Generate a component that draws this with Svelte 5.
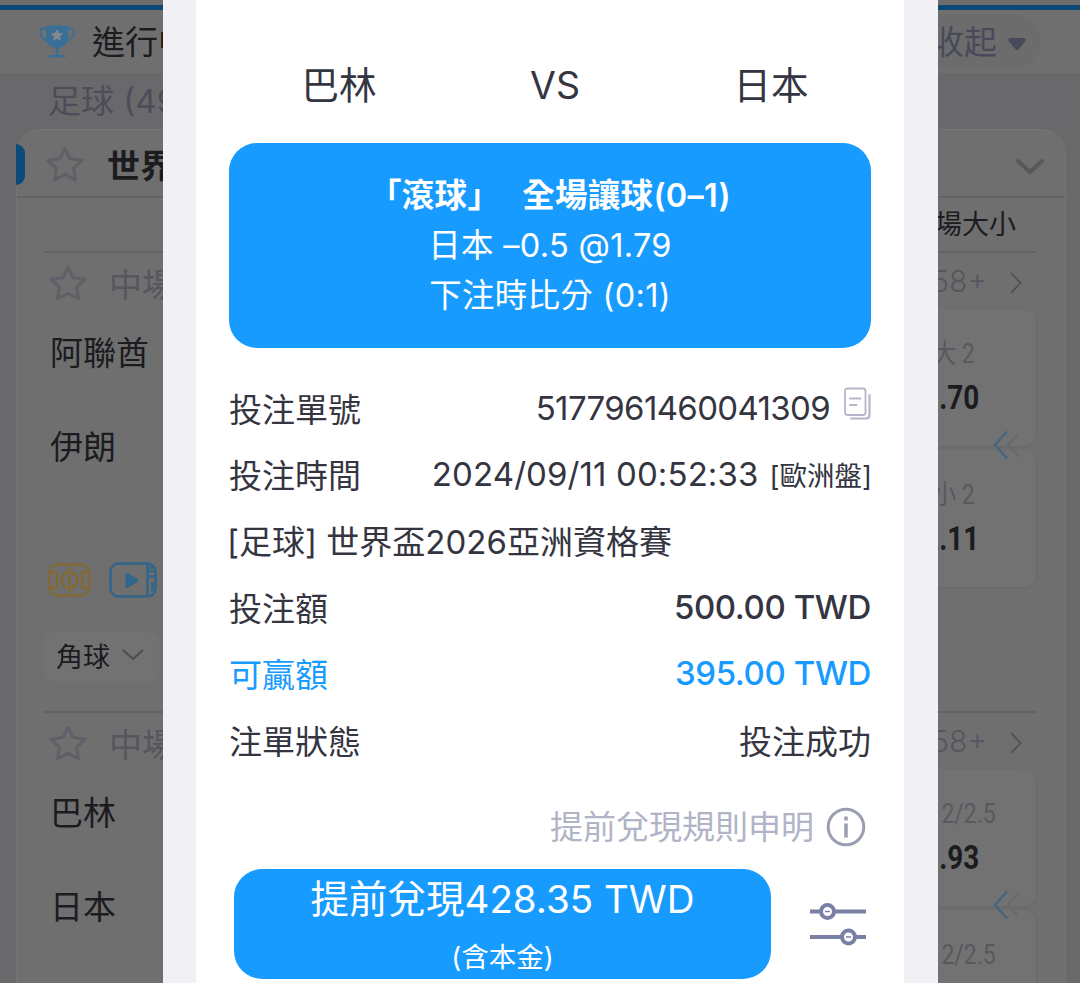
<script>
  let isCollapsed = $state(false);
  let isCopied = $state(false);

  const matches = [
    {
      home: '阿聯酋',
      away: '伊朗',
      extra: '角球',
      odds: [
        { label: '大 2', value: '1.70' },
        { label: '小 2', value: '2.11' }
      ]
    },
    {
      home: '巴林',
      away: '日本',
      odds: [
        { label: '大 2/2.5', value: '1.93' },
        { label: '小 2/2.5' }
      ]
    }
  ];

  const bet = {
    home: '巴林',
    away: '日本',
    id: '5177961460041309',
    time: '2024/09/11 00:52:33',
    market: '[歐洲盤]',
    league: '[足球] 世界盃2026亞洲資格賽',
    stake: '500.00 TWD',
    win: '395.00 TWD',
    status: '投注成功',
    cashout: '428.35 TWD'
  };
</script>

{#snippet star()}
  <svg class="star" viewBox="0 0 40 38" fill="none" stroke="currentColor" stroke-width="3" stroke-linejoin="round">
    <path d="M20 3.5 25 13.6 37 15.3 28.5 23.4 30.6 35 20 29.4 9.4 35 11.5 23.4 3 15.3 15 13.6Z"></path>
  </svg>
{/snippet}

<div class="page">
  <div class="top-line"></div>
  <div class="live-bar">
    <svg class="trophy" viewBox="0 0 36 33">
      <path d="M8 3.500H4Q1.200 3.500 1.200 6.500C1.200 11.500 4 15 9 15.500M28 3.500h4q2.800 0 2.800 3c0 5-2.800 8.500-7.800 9" fill="none" stroke="#386f96" stroke-width="1.800"></path>
      <path d="M7 2.500Q7 .500 9 .500h18q2 0 2 2V13c0 6-5 10-11 10S7 19 7 13Z" fill="#386f96"></path>
      <path d="M18 22v8M10.500 31.300h15" stroke="#386f96" stroke-width="2.600" stroke-linecap="round"></path>
      <path d="m18 4 1.900 3.900 4.200.6-3 3 .7 4.200-3.800-2-3.800 2 .7-4.200-3-3 4.200-.6Z" fill="#85888a"></path>
    </svg>
    <span class="live-title">進行中</span>
    <button class="fold-btn" onclick={() => (isCollapsed = !isCollapsed)}>
      <span>收起</span>
      <svg class="fold-arrow" width="18" height="13" viewBox="0 0 18 13"><path d="M2 0h14q3 1 1 3.500l-6.500 8q-1.500 1.500-3 0L1 3.500Q-1 1 2 0Z" fill="#484a5a"></path></svg>
    </button>
  </div>
  <div class="sport">足球 (49)</div>

  <div class="league-card">
    <div class="league-head">
      <span class="accent"></span>
      {@render star()}
      <span class="league-name">世界盃2026</span>
      <svg class="league-arrow" width="30" height="18" viewBox="0 0 30 18" fill="none" stroke="#58585a" stroke-width="4" stroke-linecap="round" stroke-linejoin="round">
        <path d="m3 3 12 11L27 3"></path>
      </svg>
    </div>
    <div class="market-head">全場大小</div>

    {#each matches as match}
      <div class="match">
        <div class="match-head">
          {@render star()}
          <span class="phase">中場</span>
          <span class="more">58+</span>
          <svg width="12" height="22" viewBox="0 0 12 22" fill="none" stroke="#505058" stroke-width="1.800"><path d="m1 1 9.500 10L1 21"></path></svg>
        </div>
        <div class="match-body">
          <div class="teams">
            <div class="team">{match.home}</div>
            <div class="team">{match.away}</div>
            {#if match.extra}
              <div class="media">
                <svg width="43" height="34" viewBox="0 0 43 34" fill="none" stroke="#87682b" stroke-width="2">
                  <rect x="1.500" y="1.500" width="40" height="31" rx="8"></rect>
                  <path d="M21.500 2v30M2 9h4.500q2.500 0 2.500 2.500v11q0 2.500-2.500 2.500H2M41 9h-4.500q-2.500 0-2.500 2.500v11q0 2.500 2.500 2.500H41"></path>
                  <circle cx="21.500" cy="17" r="7.800"></circle>
                </svg>
                <svg width="48" height="36" viewBox="0 0 48 36" fill="none" stroke="#31658b" stroke-width="2.500">
                  <rect x="1.500" y="1.500" width="45" height="33" rx="8"></rect>
                  <path d="M38.500 2v32M39 14.500h7.500M43.500 20v9"></path>
                  <path d="M38.500 2h3q5 1 5 6v3h-8Z" fill="#31658b" stroke="none" opacity=".6"></path>
                  <path d="M16.500 12v13q0 2 2 1l10-6q2-1.500 0-3l-10-6q-2-1-2 1Z" fill="#31658b" stroke="none"></path>
                </svg>
              </div>
              <div class="corner">
                <span>{match.extra}</span>
                <svg width="22" height="12" viewBox="0 0 22 12" fill="none" stroke="#4c4c50" stroke-width="1.800"><path d="m1 1 10 9L21 1"></path></svg>
              </div>
            {/if}
          </div>
          <div class="odds">
            {#each match.odds as odd}
              <div class="odd">
                <span class="odd-label">{odd.label}</span>
                {#if odd.value}
                  <span class="odd-value">{odd.value}</span>
                {/if}
              </div>
            {/each}
            <svg class="swipe" width="28" height="30" viewBox="0 0 28 30" fill="none">
              <path d="M14 1.500 2 15l12 13.500" stroke="#47657f" stroke-width="2.500"></path>
              <path d="M25 4 15 15l10 11" stroke="#606971" stroke-width="1.800"></path>
            </svg>
          </div>
        </div>
      </div>
    {/each}
  </div>
</div>

<div class="modal">
  <div class="ticket">
    <div class="versus">
      <span>{bet.home}</span>
      <span>VS</span>
      <span>{bet.away}</span>
    </div>

    <div class="pick">
      <div class="pick-title"><span>「滾球」</span><span>全場讓球(0–1)</span></div>
      <div>日本 –0.5 @1.79</div>
      <div>下注時比分 (0:1)</div>
    </div>

    <div class="row">
      <span>投注單號</span>
      <span class="value">
        <span class="bet-id">{bet.id}</span>
        <button class="copy-btn" aria-label="copy" onclick={() => (isCopied = true)}>
          <svg width="27" height="33" viewBox="0 0 27 33" fill="none" stroke="#b4b7c9" stroke-width="1.800" stroke-linecap="round">
            <rect x="1" y="1.500" width="20.500" height="26.500" rx="2.500"></rect>
            <path d="M6 11.500h10.500M6 18h6.500"></path>
            <path d="M25.500 8v20q0 3.500-3.500 3.500H7" stroke-width="2.200"></path>
          </svg>
        </button>
      </span>
    </div>
    <div class="row">
      <span>投注時間</span>
      <span class="value"><span class="bet-time">{bet.time}</span><span class="market">{bet.market}</span></span>
    </div>
    <div class="row"><span class="bet-league">{bet.league}</span></div>
    <div class="row">
      <span>投注額</span>
      <span class="money">{bet.stake}</span>
    </div>
    <div class="row win">
      <span>可贏額</span>
      <span class="money">{bet.win}</span>
    </div>
    <div class="row">
      <span>注單狀態</span>
      <span>{bet.status}</span>
    </div>

    <div class="rules">
      <span>提前兌現規則申明</span>
      <svg width="40" height="40" viewBox="0 0 40 40" fill="none" stroke="#9a9fb0" stroke-width="3">
        <circle cx="20" cy="20" r="17.800"></circle>
        <path d="M20 16.500v14M20 9.500v4" stroke-width="3.500"></path>
      </svg>
    </div>

    <div class="cashout">
      <button class="cashout-btn">
        <span class="cashout-main">提前兌現{bet.cashout}</span>
        <span class="cashout-note">(含本金)</span>
      </button>
      <svg width="56" height="44" viewBox="0 0 56 44" fill="none" stroke="#7a7fa6" stroke-width="4">
        <path d="M0 9.500h56M0 35h56" stroke-width="4"></path>
        <circle cx="17.500" cy="9.500" r="6.500" fill="#fff"></circle>
        <circle cx="38.500" cy="35" r="6.500" fill="#fff"></circle>
        <path d="M15 9.500h5M36 35h5" stroke-width="1.500"></path>
      </svg>
    </div>
  </div>
</div>

<style>
  :global(body) {
    background: #69696c;
    overflow: hidden;
  }

  .page,
  .modal {
    font-family: Inter, "Noto Sans CJK TC", sans-serif;
    white-space: nowrap;
    box-sizing: border-box;
    height: 983px;
    overflow: hidden;
  }

  button {
    border: none;
    background: none;
    padding: 0;
    font: inherit;
    color: inherit;
    cursor: pointer;
  }

  svg {
    display: block;
    flex: none;
  }

  .page {
    width: 1080px;
    background: #69696c;
    color: #1b1b20;
    font-size: 33px;
  }

  .top-line {
    height: 5px;
    border-top: 5px solid #6d6d6d;
    background: #0b4875;
  }

  .live-bar {
    display: flex;
    align-items: center;
    height: 63px;
    padding: 0 39px;
    background: #6f6f6f;
  }

  .trophy {
    width: 36px;
    height: 33px;
  }

  .live-title {
    margin-left: 17px;
    padding-bottom: 3px;
  }

  .fold-btn {
    display: flex;
    align-items: center;
    gap: 11px;
    height: 55px;
    margin-left: auto;
    padding: 0 15px 3px 30px;
    box-sizing: border-box;
    border-radius: 28px;
    background: #6c6c6d;
    color: #484a5a;
  }

  .fold-arrow {
    margin-top: 8px;
  }

  .sport {
    height: 56px;
    padding-left: 48px;
    line-height: 56px;
    color: #4d4d5a;
  }

  .league-card {
    box-sizing: border-box;
    width: 1050px;
    height: 1100px;
    margin-left: 16px;
    border: 1px solid #747475;
    border-radius: 24px;
    background: #6f6f6f;
  }

  .league-head {
    display: flex;
    align-items: center;
    height: 64px;
    padding: 2px 20px 0 0;
    border-bottom: 2px solid #646467;
  }

  .accent {
    width: 9px;
    height: 41px;
    margin-right: 20px;
    margin-left: -1px;
    border-radius: 0 9px 9px 0;
    background: #0b4b7c;
  }

  .star {
    width: 40px;
    height: 38px;
    color: #5f5f67;
  }

  .league-name {
    margin-left: 22px;
    font-weight: 700;
  }

  .league-arrow {
    margin: 5px 0 0 auto;
  }

  .market-head {
    height: 53px;
    padding-right: 49px;
    font-size: 27px;
    line-height: 53px;
    text-align: right;
  }

  .match {
    box-sizing: border-box;
    height: 460px;
    margin: 0 29px 0 27px;
    border-top: 2px solid #626268;
  }

  .match-head {
    display: flex;
    align-items: center;
    height: 56px;
    padding: 4px 14px 0 4px;
    box-sizing: border-box;
    color: #56565f;
  }

  .phase {
    margin-left: 21px;
  }

  .more {
    margin-left: auto;
    margin-right: 23px;
    padding-bottom: 4px;
    font-size: 30px;
    font-weight: 300;
  }

  .match-body {
    display: flex;
    justify-content: space-between;
  }

  .teams {
    margin-top: -2px;
  }

  .team {
    height: 94px;
    padding-left: 6px;
    line-height: 93px;
  }

  .media {
    display: flex;
    align-items: center;
    gap: 18px;
    height: 36px;
    margin: 67px 0 34px 4px;
  }

  .corner {
    display: flex;
    align-items: center;
    gap: 12px;
    width: 115px;
    height: 50px;
    padding: 0 0 4px 12px;
    box-sizing: border-box;
    border-radius: 10px;
    background: #727272;
    font-size: 27px;
  }

  .odds {
    position: relative;
    width: 170px;
  }

  .odd {
    display: flex;
    flex-direction: column;
    align-items: center;
    height: 137px;
    margin-bottom: 4px;
    padding-top: 24px;
    box-sizing: border-box;
    border-radius: 12px;
    background: #727272;
    box-shadow: 0 1px 3px #68686a;
    font-family: Roboto, "Noto Sans CJK TC", sans-serif;
  }

  .odd-label {
    padding-left: 7px;
    font-size: 27px;
    line-height: 43px;
    color: #58585f;
    transform: scaleX(0.85);
  }

  .odd-value {
    font-size: 34px;
    font-weight: 700;
    line-height: 43px;
    transform: scaleX(0.82);
  }

  .swipe {
    position: absolute;
    right: 15px;
    top: 121px;
  }

  .modal {
    position: absolute;
    left: 163px;
    top: 0;
    width: 775px;
    padding: 0 34px 0 33px;
    background: #f0f0f5;
    color: #343541;
  }

  .ticket {
    box-sizing: border-box;
    height: 100%;
    padding: 56px 33px 0;
    background: #fff;
    font-size: 33px;
  }

  .versus {
    display: grid;
    grid-template-columns: repeat(3, 216px);
    height: 87px;
    padding-left: 2px;
    font-size: 37.5px;
    line-height: 60px;
    text-align: center;
  }

  .pick {
    height: 205px;
    padding-top: 28px;
    box-sizing: border-box;
    margin-bottom: 26.5px;
    border-radius: 28px;
    background: #189bff;
    color: #fff;
    font-size: 32.5px;
    line-height: 50px;
    letter-spacing: 0.3px;
    text-align: center;
  }

  .pick-title {
    display: flex;
    justify-content: center;
    gap: 22px;
    font-weight: 600;
  }

  .row {
    display: flex;
    align-items: center;
    justify-content: space-between;
    height: 66.4px;
  }

  .value {
    display: flex;
    align-items: center;
  }

  .bet-id {
    letter-spacing: -0.65px;
  }

  .bet-time {
    letter-spacing: 0.1px;
  }

  .copy-btn {
    margin: -8px 0 0 14px;
  }

  .market {
    margin: 0 -1px 0 11px;
    font-size: 27.5px;
  }

  .bet-league {
    margin-left: -2px;
  }

  .money {
    font-weight: 500;
    letter-spacing: -0.4px;
  }

  .win {
    color: #189bff;
  }

  .rules {
    display: flex;
    align-items: center;
    justify-content: flex-end;
    gap: 12px;
    height: 40px;
    margin: 34px 5px 0 0;
    color: #b1b4c6;
  }

  .rules span {
    padding-bottom: 3px;
  }

  .cashout {
    display: flex;
    align-items: center;
    justify-content: space-between;
    margin: 22px 5px 0;
  }

  .cashout-btn {
    display: flex;
    flex-direction: column;
    align-items: center;
    width: 537px;
    height: 110px;
    border-radius: 28px;
    background: #189bff;
    color: #fff;
  }

  .cashout-main {
    font-size: 38.5px;
    line-height: 61px;
  }

  .cashout-note {
    font-size: 27.5px;
    line-height: 54px;
  }
</style>
